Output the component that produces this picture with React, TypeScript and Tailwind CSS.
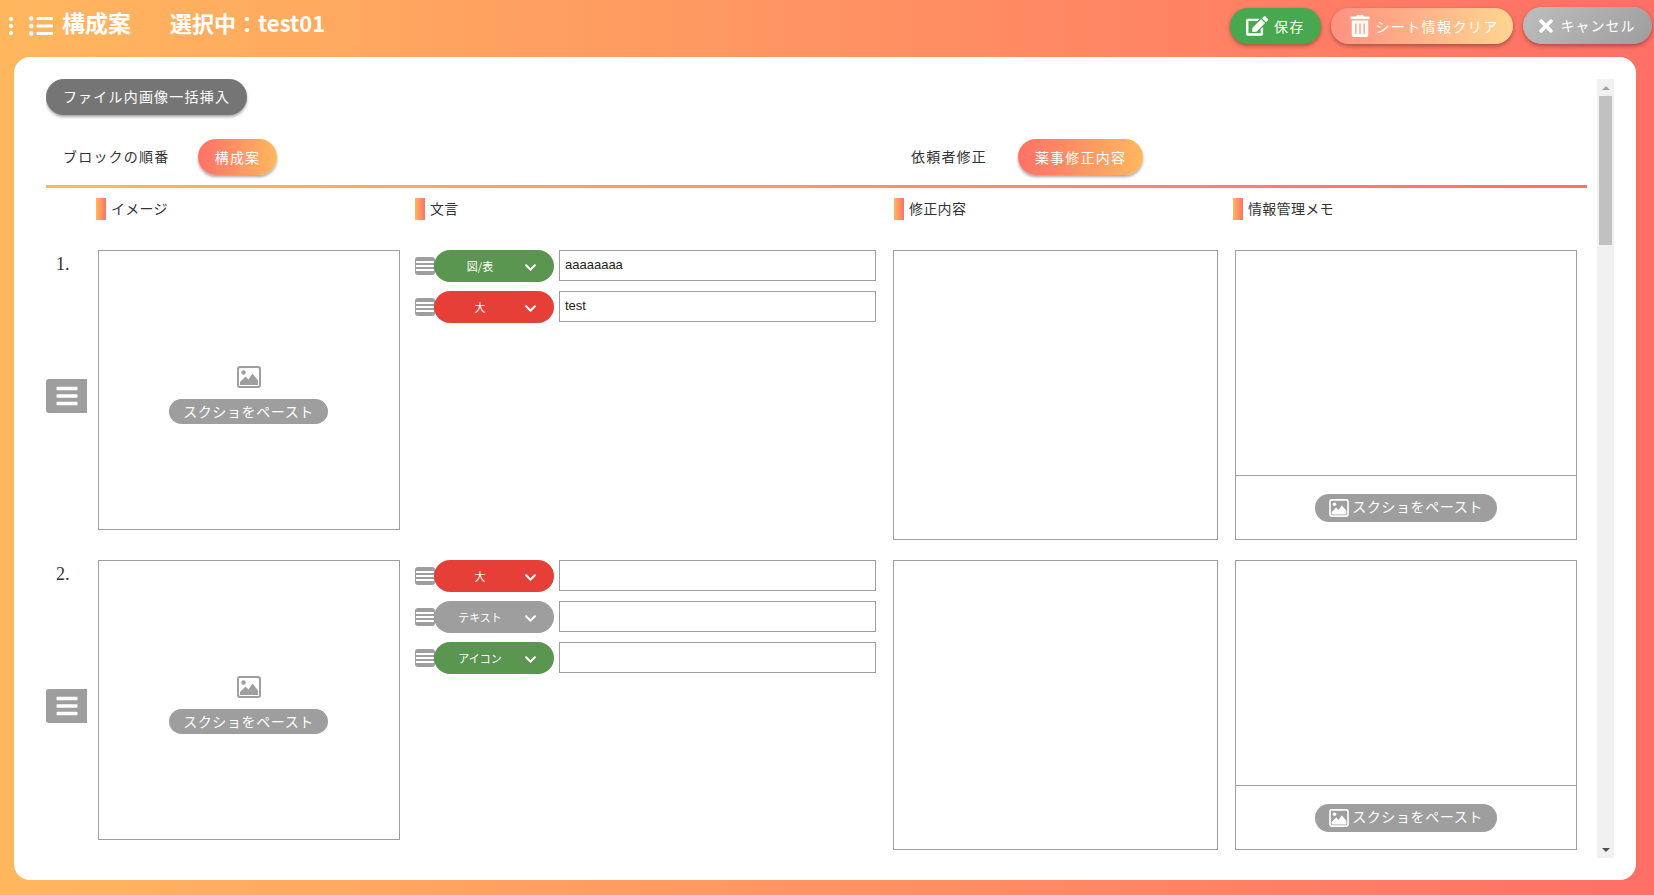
import React from "react";
import { FaBars, FaChevronDown, FaEdit, FaListUl, FaTimes, FaTrashAlt } from "react-icons/fa";

const font = "font-['Noto_Sans_CJK_JP','Noto_Sans',sans-serif]";

function PicIcon({ className }: { className: string }) {
  return (
    <svg viewBox="0 0 24 22" className={className} fill="none">
      <rect x="1" y="1" width="22" height="20" rx="2" stroke="currentColor" strokeWidth="2" />
      <circle cx="6.5" cy="6.5" r="2.2" fill="currentColor" />
      <path d="M3 19 L3 16 L8.5 10.5 L11.5 13.5 L15.5 7.5 L21 14.5 L21 19 Z" fill="currentColor" />
    </svg>
  );
}

function ColLabel({ text, className }: { text: string; className: string }) {
  return (
    <div className={`flex items-center ${className}`}>
      <span className="w-[10px] h-[22px] bg-[linear-gradient(to_right,#ffb75e,#ff7167)]" />
      <span className="ml-[5px] -mt-[1px] text-[14px] tracking-[0.3px] text-[#333]">{text}</span>
    </div>
  );
}

function PasteButton() {
  return (
    <div className="flex flex-col items-center mr-[1px]">
      <PicIcon className="w-[24px] h-[22px] text-[#9e9e9e]" />
      <div className="mt-[11px] w-[159px] h-[25px] rounded-full bg-[#9e9e9e] text-white text-[14px] tracking-[0.6px] leading-[24px] text-center">
        スクショをペースト
      </div>
    </div>
  );
}

function MemoPaste() {
  return (
    <div className="w-[182px] h-[28px] rounded-full bg-[#9e9e9e] text-white text-[14px] tracking-[0.6px] flex items-center justify-center">
      <PicIcon className="w-[20px] h-[18px] mr-[3px] shrink-0" />
      <span className="-mt-[2px]">スクショをペースト</span>
    </div>
  );
}

type Line = { label: string; color: string; value: string };

function TextLine({ line }: { line: Line }) {
  return (
    <div className="flex items-start h-[32px]">
      <div className="mt-[7px] w-[20px] h-[18px] rounded-[3px] bg-[#9e9e9e] flex flex-col justify-center gap-[2px] px-[1px]">
        <span className="h-[2px] bg-white" />
        <span className="h-[2px] bg-white" />
        <span className="h-[2px] bg-white" />
      </div>
      <div className={`-ml-[1px] relative w-[120px] h-[32px] rounded-full ${line.color} text-white text-[11px] flex items-center`}>
        <span className="w-[92px] text-center">{line.label}</span>
        <FaChevronDown className="absolute left-[90px] top-[11px] text-[13px]" />
      </div>
      <div className="ml-[5px] w-[317px] h-[31px] border border-[#9e9e9e] bg-white px-[5px] text-[13px] text-[#222] leading-[27px] font-['Liberation_Sans',sans-serif]">
        {line.value}
      </div>
    </div>
  );
}

function Row({ n, lines }: { n: number; lines: Line[] }) {
  return (
    <div className="grid grid-cols-[52px_317px_478px_342px_342px] h-[290px] mb-[20px]">
      <div className="flex flex-col">
        <div className="pl-[10px] pt-[2px] text-[18px] leading-[24px] text-[#333] font-['Liberation_Serif',serif]">{n}.</div>
        <div className="mt-[103px] w-[41px] h-[34px] rounded-l-[3px] bg-[#9e9e9e] flex items-center justify-center">
          <FaBars className="text-white text-[24px]" />
        </div>
      </div>
      <div className="w-[302px] h-[280px] border border-[#9e9e9e] flex items-center justify-center pt-[10px]">
        <PasteButton />
      </div>
      <div className="flex flex-col gap-[9px]">
        {lines.map((l, i) => (
          <TextLine key={i} line={l} />
        ))}
      </div>
      <div className="w-[325px] h-[290px] border border-[#9e9e9e]" />
      <div className="w-[342px] h-[290px] border border-[#9e9e9e] flex flex-col">
        <div className="h-[225px] border-b border-[#9e9e9e]" />
        <div className="flex-1 flex items-center justify-center">
          <MemoPaste />
        </div>
      </div>
    </div>
  );
}

export default function App() {
  const green = "bg-[#5a9650]";
  const red = "bg-[#e53f38]";
  const gray = "bg-[#9e9e9e]";
  return (
    <div className={`w-[1654px] h-[895px] overflow-hidden flex flex-col bg-[linear-gradient(to_right,#ffb75e,#ff6f66)] ${font}`}>
      <header className="h-[57px] shrink-0 flex items-start text-white">
        <div className="ml-[9px] mt-[17px] flex flex-col gap-[3px]">
          <span className="w-[4px] h-[4px] rounded-full bg-white" />
          <span className="w-[4px] h-[4px] rounded-full bg-white" />
          <span className="w-[4px] h-[4px] rounded-full bg-white" />
        </div>
        <FaListUl className="ml-[16px] mt-[14px] text-[24px]" />
        <span className="ml-[9px] mt-[6px] text-[23px] leading-[32px] font-bold">構成案</span>
        <span className="ml-[39px] mt-[6px] text-[22px] leading-[32px] font-bold">選択中：test01</span>
        <div className="ml-auto mr-[2px] mt-[8px] flex items-start gap-[10px] text-[14px] tracking-[1.4px]">
          <div className="w-[91px] h-[36px] rounded-full bg-[#47a84f] shadow-[0_2px_4px_rgba(0,0,0,0.35)] flex items-center justify-center">
            <FaEdit className="text-[22px] mr-[6px]" />
            <span>保存</span>
          </div>
          <div className="w-[182px] h-[36px] rounded-full bg-[linear-gradient(to_right,#ff9182,#ffd590)] shadow-[0_2px_4px_rgba(0,0,0,0.35)] flex items-center justify-center pl-[2px]">
            <FaTrashAlt className="text-[22px] ml-[2px] mr-[4px]" />
            <span>シート情報クリア</span>
          </div>
          <div className="-mt-[1px] w-[129px] h-[37px] rounded-full bg-[linear-gradient(135deg,#bdbdbd,#9e9e9e)] shadow-[0_2px_4px_rgba(0,0,0,0.35)] flex items-center justify-center tracking-[1px] pr-[4px]">
            <FaTimes className="text-[20px] mr-[5px]" />
            <span>キャンセル</span>
          </div>
        </div>
      </header>
      <main className="ml-[14px] mr-[18px] h-[823px] rounded-[16px] bg-white pl-[32px] pt-[22px] flex overflow-hidden">
        <div className="w-[1551px] h-[779px] overflow-hidden">
          <div className="w-[201px] h-[36px] rounded-full bg-[#757575] text-white text-[14px] tracking-[1.2px] flex items-center justify-center shadow-[0_2px_3px_rgba(0,0,0,0.35)]">
            <span className="-mt-[1px]">ファイル内画像一括挿入</span>
          </div>
          <div className="mt-[24px] h-[36px] flex items-center w-[1541px]">
            <span className="ml-[17px] -mt-[1px] w-[115px] whitespace-nowrap text-[14px] tracking-[1.2px] text-[#333]">ブロックの順番</span>
            <div className="ml-[20px] w-[79px] h-[36px] rounded-full bg-[linear-gradient(to_right,#ff7167,#ffb75e)] text-white text-[14px] tracking-[1.2px] flex items-center justify-center shadow-[0_2px_3px_rgba(0,0,0,0.35)]">
              構成案
            </div>
            <span className="ml-[634px] -mt-[1px] w-[76px] whitespace-nowrap text-[14px] tracking-[1.2px] text-[#333]">依頼者修正</span>
            <div className="ml-[31px] w-[125px] h-[36px] rounded-full bg-[linear-gradient(to_right,#ff7167,#ffb75e)] text-white text-[14px] tracking-[1.2px] flex items-center justify-center shadow-[0_2px_3px_rgba(0,0,0,0.35)]">
              薬事修正内容
            </div>
          </div>
          <div className="mt-[10px] w-[1541px] h-[3px] bg-[linear-gradient(to_right,#ffb75e,#ff7167)]" />
          <div className="mt-[10px] h-[22px] flex pl-[50px]">
            <ColLabel text="イメージ" className="w-[319px]" />
            <ColLabel text="文言" className="w-[479px]" />
            <ColLabel text="修正内容" className="w-[339px]" />
            <ColLabel text="情報管理メモ" className="w-[300px]" />
          </div>
          <div className="mt-[30px]">
            <Row
              n={1}
              lines={[
                { label: "図/表", color: green, value: "aaaaaaaa" },
                { label: "大", color: red, value: "test" },
              ]}
            />
            <Row
              n={2}
              lines={[
                { label: "大", color: red, value: "" },
                { label: "テキスト", color: gray, value: "" },
                { label: "アイコン", color: green, value: "" },
              ]}
            />
          </div>
        </div>
        <div className="w-[17px] h-[779px] bg-[#f1f1f1] flex flex-col items-center">
          <div className="h-[17px] flex items-center justify-center">
            <div className="w-0 h-0 border-l-[4px] border-r-[4px] border-b-[4px] border-l-transparent border-r-transparent border-b-[#a3a3a3]" />
          </div>
          <div className="w-[13px] h-[149px] bg-[#c1c1c1]" />
          <div className="flex-1" />
          <div className="h-[17px] flex items-center justify-center">
            <div className="w-0 h-0 border-l-[4px] border-r-[4px] border-t-[4px] border-l-transparent border-r-transparent border-t-[#505050]" />
          </div>
        </div>
      </main>
    </div>
  );
}
